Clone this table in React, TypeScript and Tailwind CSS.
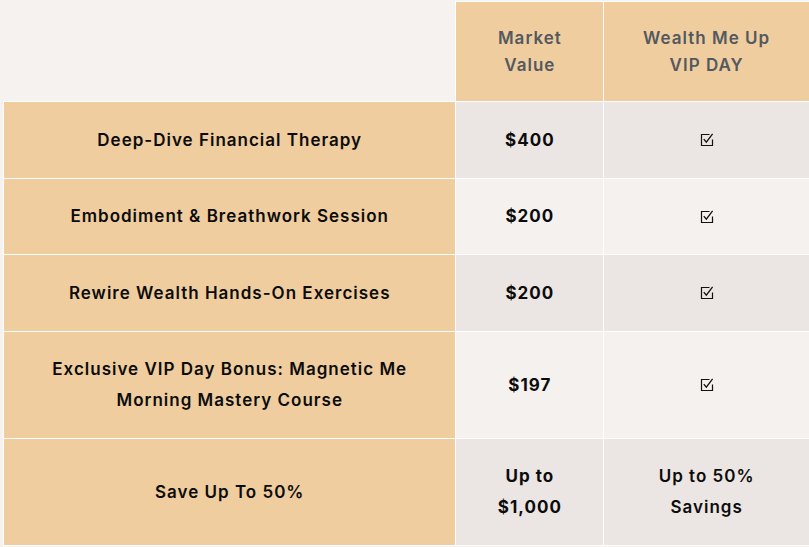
import React from "react";

const TAN = "bg-[#efcd9f]";
const GRAY = "bg-[#ebe6e3]";
const LIGHT = "bg-[#f5f1ee]";

type Row = { label: React.ReactNode; value: React.ReactNode; vip: React.ReactNode; h: string; bg: string };

const Check = () => (
  <svg width="14" height="14" viewBox="0 0 14 14" fill="none" className="block">
    <path d="M9.5 1.5H1.5V12.5H12.5V6.5" stroke="#111" strokeWidth="1.2" />
    <path d="M3.8 6.2L6.3 9.2L12.6 0.8" stroke="#111" strokeWidth="1.3" />
  </svg>
);

const rows: Row[] = [
  { label: "Deep-Dive Financial Therapy", value: "$400", vip: <Check />, h: "h-[77px]", bg: GRAY },
  { label: "Embodiment & Breathwork Session", value: "$200", vip: <Check />, h: "h-[76px]", bg: LIGHT },
  { label: "Rewire Wealth Hands-On Exercises", value: "$200", vip: <Check />, h: "h-[77px]", bg: GRAY },
  {
    label: (
      <>
        Exclusive VIP Day Bonus: Magnetic Me
        <br />
        Morning Mastery Course
      </>
    ),
    value: "$197",
    vip: <Check />,
    h: "h-[107px]",
    bg: LIGHT,
  },
  {
    label: "Save Up To 50%",
    value: (
      <>
        Up to
        <br />
        $1,000
      </>
    ),
    vip: (
      <>
        Up to 50%
        <br />
        Savings
      </>
    ),
    h: "h-[107px]",
    bg: GRAY,
  },
];

export default function App() {
  return (
    <div
      className="w-[809px] h-[547px] overflow-hidden bg-[#f5f2ef] pl-[3px] pt-[1px]"
      style={{ fontFamily: 'Inter, "Open Sans", sans-serif' }}
    >
      <div className="flex h-[100px]">
        <div className="w-[453px]" />
        <div className={`w-[148px] border-l border-t border-white ${TAN} flex items-center justify-center text-center text-[17px] font-semibold tracking-[1px] leading-[27px] text-[#54595f]`}>
          <div className="pt-px">
            Market
            <br />
            Value
          </div>
        </div>
        <div className={`w-[206px] border-l border-t border-white ${TAN} flex items-center justify-center text-center text-[17px] font-semibold tracking-[1px] leading-[27px] text-[#54595f]`}>
          <div className="pt-px">
            Wealth Me Up
            <br />
            VIP DAY
          </div>
        </div>
      </div>
      {rows.map((r, i) => (
        <div key={i} className={`flex ${r.h} ${i === rows.length - 1 ? "border-b border-white box-content" : ""}`}>
          <div className={`w-[453px] border-l border-t border-white ${TAN} flex items-center justify-center text-center text-[17px] font-semibold tracking-[1px] leading-[31px] text-[#0c0c0c]`}>
            <div>{r.label}</div>
          </div>
          <div className={`w-[148px] border-l border-t border-white ${r.bg} flex items-center justify-center text-center text-[17px] font-bold tracking-[1px] leading-[31px] text-[#0c0c0c]`}>
            <div>{r.value}</div>
          </div>
          <div className={`w-[206px] border-l border-t border-white ${r.bg} flex items-center justify-center text-center text-[17px] font-semibold tracking-[1px] leading-[31px] text-[#0c0c0c]`}>
            <div className="flex flex-col items-center">{r.vip}</div>
          </div>
        </div>
      ))}
    </div>
  );
}
